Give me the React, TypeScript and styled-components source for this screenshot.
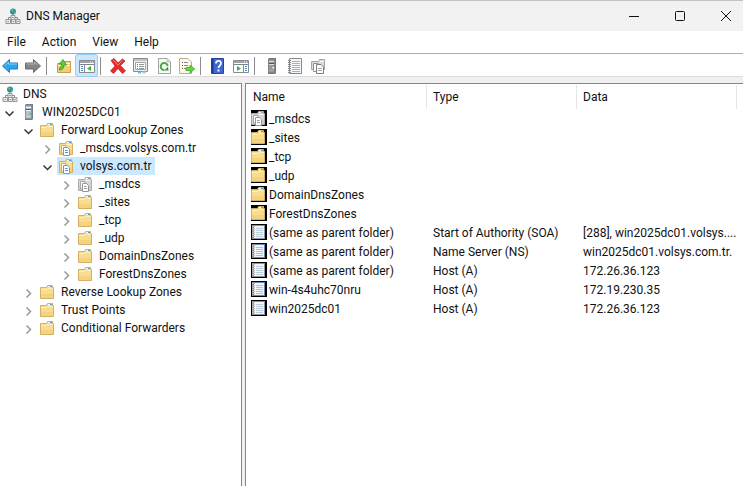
import React from "react";
import styled, { createGlobalStyle } from "styled-components";

const Global = createGlobalStyle`
  * { box-sizing: border-box; }
  html, body { margin: 0; overflow: hidden; }
  body, button, table {
    font-family: Roboto, "Open Sans", sans-serif;
    font-size: 12px;
    line-height: 18px;
    color: #111;
  }
  button { border: 0; padding: 0; margin: 0; background: transparent; }
  svg { display: block; flex: none; }
`;

const Window = styled.div`
  display: flex;
  flex-direction: column;
  height: 100vh;
  background: #fff;
`;

const TitleBar = styled.header`
  display: flex;
  align-items: center;
  height: 31px;
  flex: none;
  padding-left: 5px;
  gap: 5px;
  background: #f2f2f2;
  border-top: 1px solid #c2c2c2;
`;

const Title = styled.h1`
  flex: 1;
  margin: 0;
  font-size: 12px;
  font-weight: 400;
`;

const CaptionButton = styled.button`
  width: 46px;
  height: 30px;
  display: grid;
  place-items: center;
`;

const CaptionButtons = styled.div`
  display: flex;
  margin-right: -6px;
`;

const MenuBar = styled.nav`
  display: flex;
  align-items: center;
  height: 22px;
  flex: none;
  margin-left: -1px;
`;

const MenuButton = styled.button`
  padding: 0 8px;
`;

const ToolBar = styled.div`
  display: flex;
  height: 24px;
  flex: none;
  margin-left: -2px;
  border-top: 1px solid #a9a9b1;
  border-bottom: 1px solid #dcdcdc;
`;

const ToolButton = styled.button<{ $on?: boolean }>`
  display: grid;
  place-items: center;
  width: 23px;
  height: 23px;
  padding-top: 1px;
  border-radius: 3px;
  border: ${(p) => (p.$on ? "1px solid #99ccf5" : "0")};
  background: ${(p) => (p.$on ? "#cce6fc" : "transparent")};
`;

const Separator = styled.span`
  width: 1px;
  height: 18px;
  margin: 3px 5px 0 2px;
  background: #8d8d8d;
`;

const Body = styled.main`
  display: flex;
  flex: 1;
  min-height: 0;
  gap: 3px;
  padding-top: 6px;
  background: #f0f0f0;
`;

const TreePane = styled.nav`
  flex: 0 0 242px;
  background: #fff;
  border: solid #828790;
  border-width: 1px 1px 0 0;
`;

const ListPane = styled.section`
  flex: 1;
  min-width: 0;
  overflow: hidden;
  background: #fff;
  border: solid #828790;
  border-width: 1px 0 0 1px;
`;

const Tree = styled.ul`
  list-style: none;
  margin: 0;
  padding: 1px 0 0;
`;

const TreeRow = styled.li<{ $level: number }>`
  display: flex;
  height: 18px;
  padding-left: ${(p) => Math.max(0, p.$level - 1) * 19}px;
`;

const Expander = styled.button`
  width: 19px;
  height: 18px;
  padding-top: 2px;
  display: grid;
  place-items: center;
`;

const TreeItem = styled.button<{ $selected: boolean }>`
  display: flex;
  align-items: center;
  gap: 5px;
  height: 18px;
  padding: 0 3px 0 2px;
  white-space: nowrap;
  background: ${(p) => (p.$selected ? "#cce8ff" : "transparent")};
`;

const Table = styled.table`
  width: 100%;
  table-layout: fixed;
  border-collapse: separate;
  border-spacing: 0;
`;

const NameCol = styled.col`
  width: 181px;
`;
const TypeCol = styled.col`
  width: 150px;
`;
const DataCol = styled.col`
  width: 160px;
`;

const HeadCell = styled.th`
  height: 26px;
  padding: 0 6px 0 7px;
  text-align: left;
  font-weight: 400;
  background: linear-gradient(#e5e5e5, #e5e5e5) right 1px / 1px 24px no-repeat;
  &:last-child { background: none; }
  &:not(:first-child) { padding-left: 6px; }
`;

const Cell = styled.td`
  height: 19px;
  padding: 0 0 0 6px;
  vertical-align: top;
  white-space: nowrap;
`;

const NameCell = styled.td`
  height: 19px;
  padding: 0 0 0 5px;
`;

const NameLine = styled.div`
  display: flex;
  gap: 2px;
  height: 19px;
  white-space: nowrap;
`;

const IconBox = styled.span`
  width: 16px;
  height: 16px;
  background: #000;
`;

type IconProps = { children: React.ReactNode };
const Icon = ({ children }: IconProps) => (
  <svg width="16" height="16" viewBox="0 0 16 16" aria-hidden="true">
    {children}
  </svg>
);

const DnsIcon = () => (
  <Icon>
    <path d="M8 6v4M3.500 11V9.500h9V11" fill="none" stroke="#888" />
    <circle cx="8" cy="3.500" r="3" fill="#2b86c4" />
    <path d="M5.500 2.500l2-2 1.500 1.500-1.500 2zM9 3.500h2l-1 2-1.500.5z" fill="#52c552" />
    <path d="M6 7.500h4v4H6zM1 11.500h4.500v4H1zM6.500 11.500h4v4h-4zM11 11.500h4v4h-4z" fill="#eee" stroke="#959595" />
    <path d="M2.500 13.500H4M7.500 13.500h2M12 13.500h2M7 9.500h2" stroke="#999" />
  </Icon>
);

const ServerIcon = ({ dark = false }: { dark?: boolean }) => (
  <Icon>
    <path d="M4 1l1-1h7v15l-1 1H4z" fill={dark ? "#777" : "#73808a"} />
    <path d="M4.500 1.500h6v13h-6z" fill={dark ? "#999" : "#b5c1c9"} stroke={dark ? "#858585" : "#87949e"} />
    <path d="M5 3.500h5M5 6.500h5" stroke={dark ? "#ddd" : "#eef4f7"} />
    <path d="M5 5.500h5" stroke="#555" />
    <path d="M8.500 9h1.500v1.500H8.500z" fill={dark ? "#fff" : "#45cc52"} />
    <path d="M5 12.500h4" stroke={dark ? "#aaa" : "#ccd5da"} />
  </Icon>
);

const FolderShape = ({ gray = false }: { gray?: boolean }) => (
  <>
    <path
      d="M.5 3.500H6.500L7.500 1.500h5v2h1v11H.5z"
      fill={gray ? "#d6d6d6" : "#f8dc8f"}
      stroke={gray ? "#ababab" : "#d3b063"}
    />
    <path d="M8 2.500h4" stroke="#fff" />
    <path d="M10 2.500h2" stroke={gray ? "#999" : "#4a9ae0"} />
    <path d="M1 5.500h5.500l1-1H13" fill="none" stroke={gray ? "#eee" : "#fff0b8"} />
    <path d="M1 10h12v4H1z" fill={gray ? "#bdbdbd" : "#edc568"} opacity=".4" />
  </>
);

const FolderIcon = () => (
  <Icon>
    <FolderShape />
  </Icon>
);

const ZoneIcon = ({ gray = false }: { gray?: boolean }) => (
  <Icon>
    <FolderShape gray={gray} />
    <path d="M2.500 5.500H7V13H2.500z" fill="#fff" stroke={gray ? "#a5a5a5" : "#a5b5c0"} />
    <path d="M4.500 7.500H8.500L10.500 9.500v6h-6z" fill="#fff" stroke={gray ? "#959595" : "#7f9bad"} />
    <path d="M6 10.500h2.500M6 12.500h3" stroke={gray ? "#999" : "#4b92cc"} />
  </Icon>
);

const RecordIcon = ({ blue = false }: { blue?: boolean }) => (
  <Icon>
    <path d="M2 1h12v14H2z" fill={blue ? "#6587bb" : "#8a90a5"} />
    <path d="M3 2h10v12H3z" fill="#f3f6f9" />
    <path
      d="M5 4.500h7M5 6.500h7M5 8.500h7M5 10.500h7M5 12.500h7"
      stroke={blue ? "#9bc9ec" : "#bdced9"}
    />
    <path d="M1.500 1v14" stroke="#999" />
    <path d="M1 2.500h3M1 4.500h3M1 6.500h3M1 8.500h3M1 10.500h3M1 12.500h3" stroke="#bbb" />
  </Icon>
);

const ArrowIcon = ({ back = false }: { back?: boolean }) => (
  <Icon>
    <path
      d={back ? "M.5 8L7.500 1.500v3.500h8v6h-8v3.500z" : "M15.500 8L8.500 1.500v3.500h-8v6h8v3.500z"}
      fill={back ? "#2ca7ed" : "#858585"}
      stroke={back ? "#2579b8" : "#6b6b6b"}
    />
    <path d={back ? "M3 7.500l3.500-3.500v2H15" : "M1.500 6h8V4l3 3"} fill="none" stroke={back ? "#83d3fb" : "#b5b5b5"} />
  </Icon>
);

const UpFolderIcon = () => (
  <Icon>
    <path d="M1.500 5.500H6l1-2h7.500v11h-13z" fill="#f0cf7c" stroke="#c89e49" />
    <path d="M9 5.500h5M2 7.500h12" stroke="#fff0bc" />
    <path d="M3.500 12c3 0 4.500-2 4.500-5h2.500L7 1.500 3 6h2.500c0 2-.5 3.500-2 4z" fill="#62cc38" stroke="#329622" strokeWidth=".8" />
  </Icon>
);

const ConsoleIcon = ({ play = false }: { play?: boolean }) => (
  <Icon>
    <path d="M.5 2.500h15v12H.5z" fill="#fff" stroke="#858b92" />
    <path d="M1 3h14v2H1z" fill="#9ba2aa" />
    <path d="M1 6.500h14" stroke="#7e858c" />
    <path d="M11 4h1M13 4h1" stroke="#fff" />
    <path d={play ? "M10.500 7v7" : "M5.500 7v7"} stroke="#858b92" />
    <path d={play ? "M12 8.500h2M12 10.500h2M12 12.500h2" : "M2 8.500h2M2 10.500h2M2 12.500h2"} stroke="#428ac6" />
    <path d={play ? "M4 8v5l4-2.500z" : "M12 8v5l-4-2.500z"} fill="#38b52f" />
  </Icon>
);

const DeleteIcon = () => (
  <Icon>
    <path
      d="M1 2.500L4 .5 8 5l4.500-4L15 3l-4.500 4.500 5 5.500-3 2.500L8 10.500 3.500 15.500.5 13l4.500-5z"
      fill="#e52e2b"
      stroke="#b81f22"
      strokeWidth=".7"
    />
    <path d="M3 2l5 5 4.500-4.500" fill="none" stroke="#f37a70" />
  </Icon>
);

const PropertiesIcon = () => (
  <Icon>
    <path d="M.5.500h14v13H.5z" fill="#eee" stroke="#898989" />
    <path d="M1 2h13" stroke="#999" />
    <path d="M2.500 4.500h10v7h-10z" fill="#fff" stroke="#9da4aa" />
    <path d="M4 6.500h1M4 8.500h1M4 10.500h1" stroke="#168bd2" />
    <path d="M6 6.500h5M6 8.500h5M6 10.500h5" stroke="#8e979e" />
    <path d="M5 14.500h3" stroke="#55c2f2" strokeWidth="2" />
    <path d="M9 14.500h4" stroke="#ccc" strokeWidth="2" />
  </Icon>
);

const RefreshIcon = () => (
  <Icon>
    <path d="M2.500.500H11L14.500 4v11.500h-12z" fill="#fafafa" stroke="#a1a1a1" />
    <path d="M11 1v3h3" fill="none" stroke="#bbb" />
    <path d="M11.700 8A3.500 3.500 0 1 0 8.500 12" fill="none" stroke="#43ac45" strokeWidth="2" />
    <path d="M12.500 12.500H8.500l3.500-4z" fill="#329c37" />
  </Icon>
);

const ExportIcon = () => (
  <Icon>
    <path d="M.5.500H9L12.500 4v11.500H.5z" fill="#fffbe5" stroke="#b9ad8d" />
    <path d="M3 4.500h1M3 7.500h1M3 10.500h1" stroke="#555" />
    <path d="M5 4.500h4M5 7.500h4M5 10.500h3" stroke="#8d83ac" />
    <path d="M7 9.500h4V7l4.700 4-4.700 4v-2.500H7z" fill="#63d647" stroke="#3aaa2c" strokeWidth=".8" />
  </Icon>
);

const HelpIcon = () => (
  <Icon>
    <path d="M1.500.500h12v15h-12z" fill="#4068d0" stroke="#2545a0" />
    <path d="M2.500 1v14" stroke="#1e3c94" strokeWidth="2" />
    <path d="M6 5.500C6 2 11 2 11 5.200c0 2.500-2.500 2.300-2.500 4.800" fill="none" stroke="#fff" strokeWidth="1.800" />
    <path d="M7.500 11.500h2v2h-2z" fill="#fff" />
  </Icon>
);

const NotebookIcon = () => (
  <Icon>
    <path d="M2.500.500h12v15h-12z" fill="#f5f8fb" stroke="#888" />
    <path d="M5 3.500h8M5 5.500h8M5 7.500h8M5 9.500h8M5 11.500h8M5 13.500h8" stroke="#8db9da" />
    <path d="M1 2.500h3M1 4.500h3M1 6.500h3M1 8.500h3M1 10.500h3M1 12.500h3M1 14.500h3" stroke="#888" />
  </Icon>
);

const CopyFolderIcon = () => (
  <Icon>
    <path d="M1.500 3.500H8L9.500 1.500h5v10h-13z" fill="#dadada" stroke="#a5a5a5" />
    <path d="M10 3.500h4" stroke="#fff" />
    <path d="M3.500 5.500H8v8H3.500z" fill="#fff" stroke="#909090" />
    <path d="M6.500 6.500H11L13.500 9v6.500h-7z" fill="#fff" stroke="#808080" />
    <path d="M8 10.500h4M8 12.500h4" stroke="#a5a5a5" />
  </Icon>
);

const Chevron = ({ open }: { open: boolean }) => (
  <svg width="9" height="9" viewBox="0 0 9 9" aria-hidden="true">
    <path
      d={open ? "M.5 2.500l4 4 4-4" : "M2.500.5l4 4-4 4"}
      fill="none"
      stroke={open ? "#333" : "#999"}
      strokeWidth="1.500"
    />
  </svg>
);

type Node = { level: number; label: string; icon: React.ReactNode; open?: boolean; selected?: boolean };

const nodes: Node[] = [
  { level: 0, label: "DNS", icon: <DnsIcon /> },
  { level: 1, label: "WIN2025DC01", icon: <ServerIcon />, open: true },
  { level: 2, label: "Forward Lookup Zones", icon: <FolderIcon />, open: true },
  { level: 3, label: "_msdcs.volsys.com.tr", icon: <ZoneIcon /> },
  { level: 3, label: "volsys.com.tr", icon: <ZoneIcon />, open: true, selected: true },
  { level: 4, label: "_msdcs", icon: <ZoneIcon gray /> },
  { level: 4, label: "_sites", icon: <FolderIcon /> },
  { level: 4, label: "_tcp", icon: <FolderIcon /> },
  { level: 4, label: "_udp", icon: <FolderIcon /> },
  { level: 4, label: "DomainDnsZones", icon: <FolderIcon /> },
  { level: 4, label: "ForestDnsZones", icon: <FolderIcon /> },
  { level: 2, label: "Reverse Lookup Zones", icon: <FolderIcon /> },
  { level: 2, label: "Trust Points", icon: <FolderIcon /> },
  { level: 2, label: "Conditional Forwarders", icon: <FolderIcon /> },
];

type RecordRow = { name: string; type?: string; data?: string; icon: React.ReactNode };

const records: RecordRow[] = [
  { name: "_msdcs", icon: <ZoneIcon gray /> },
  { name: "_sites", icon: <FolderIcon /> },
  { name: "_tcp", icon: <FolderIcon /> },
  { name: "_udp", icon: <FolderIcon /> },
  { name: "DomainDnsZones", icon: <FolderIcon /> },
  { name: "ForestDnsZones", icon: <FolderIcon /> },
  { name: "(same as parent folder)", type: "Start of Authority (SOA)", data: "[288], win2025dc01.volsys....", icon: <RecordIcon /> },
  { name: "(same as parent folder)", type: "Name Server (NS)", data: "win2025dc01.volsys.com.tr.", icon: <RecordIcon blue /> },
  { name: "(same as parent folder)", type: "Host (A)", data: "172.26.36.123", icon: <RecordIcon /> },
  { name: "win-4s4uhc70nru", type: "Host (A)", data: "172.19.230.35", icon: <RecordIcon blue /> },
  { name: "win2025dc01", type: "Host (A)", data: "172.26.36.123", icon: <RecordIcon /> },
];

type Tool = { label: string; icon: React.ReactNode; on?: boolean };

const toolGroups: Tool[][] = [
  [
    { label: "Back", icon: <ArrowIcon back /> },
    { label: "Forward", icon: <ArrowIcon /> },
  ],
  [
    { label: "Up one level", icon: <UpFolderIcon /> },
    { label: "Show or hide console tree", icon: <ConsoleIcon />, on: true },
  ],
  [
    { label: "Delete", icon: <DeleteIcon /> },
    { label: "Properties", icon: <PropertiesIcon /> },
    { label: "Refresh", icon: <RefreshIcon /> },
    { label: "Export list", icon: <ExportIcon /> },
  ],
  [
    { label: "Help", icon: <HelpIcon /> },
    { label: "Show or hide action pane", icon: <ConsoleIcon play /> },
  ],
  [
    { label: "New server", icon: <ServerIcon dark /> },
    { label: "New record", icon: <NotebookIcon /> },
    { label: "New zone", icon: <CopyFolderIcon /> },
  ],
];

export default function App() {
  return (
    <Window>
      <Global />
      <TitleBar>
        <DnsIcon />
        <Title>DNS Manager</Title>
        <CaptionButtons>
          <CaptionButton aria-label="Minimize">
            <svg width="10" height="10" viewBox="0 0 10 10"><path d="M0 5.500h10" stroke="#111" /></svg>
          </CaptionButton>
          <CaptionButton aria-label="Maximize">
            <svg width="10" height="10" viewBox="0 0 10 10">
              <rect x=".5" y=".5" width="9" height="9" rx="1" fill="none" stroke="#111" />
            </svg>
          </CaptionButton>
          <CaptionButton aria-label="Close">
            <svg width="10" height="10" viewBox="0 0 10 10"><path d="M0 0l10 10M10 0L0 10" stroke="#111" /></svg>
          </CaptionButton>
        </CaptionButtons>
      </TitleBar>
      <MenuBar>
        {["File", "Action", "View", "Help"].map((m) => (
          <MenuButton key={m}>{m}</MenuButton>
        ))}
      </MenuBar>
      <ToolBar role="toolbar">
        {toolGroups.map((group, i) => (
          <React.Fragment key={i}>
            {i > 0 && <Separator />}
            {group.map((t) => (
              <ToolButton key={t.label} aria-label={t.label} $on={t.on}>
                {t.icon}
              </ToolButton>
            ))}
          </React.Fragment>
        ))}
      </ToolBar>
      <Body>
        <TreePane>
          <Tree>
            {nodes.map((n) => (
              <TreeRow key={n.level + n.label} $level={n.level}>
                {n.level > 0 && (
                  <Expander aria-label={(n.open ? "Collapse " : "Expand ") + n.label}>
                    <Chevron open={!!n.open} />
                  </Expander>
                )}
                <TreeItem $selected={!!n.selected}>
                  {n.icon}
                  <span>{n.label}</span>
                </TreeItem>
              </TreeRow>
            ))}
          </Tree>
        </TreePane>
        <ListPane>
          <Table>
            <colgroup>
              <NameCol />
              <TypeCol />
              <DataCol />
              <col />
            </colgroup>
            <thead>
              <tr>
                <HeadCell>Name</HeadCell>
                <HeadCell>Type</HeadCell>
                <HeadCell>Data</HeadCell>
                <HeadCell />
              </tr>
            </thead>
            <tbody>
              {records.map((r, i) => (
                <tr key={i}>
                  <NameCell>
                    <NameLine>
                      <IconBox>{r.icon}</IconBox>
                      <span>{r.name}</span>
                    </NameLine>
                  </NameCell>
                  <Cell>{r.type}</Cell>
                  <Cell>{r.data}</Cell>
                  <Cell />
                </tr>
              ))}
            </tbody>
          </Table>
        </ListPane>
      </Body>
    </Window>
  );
}
